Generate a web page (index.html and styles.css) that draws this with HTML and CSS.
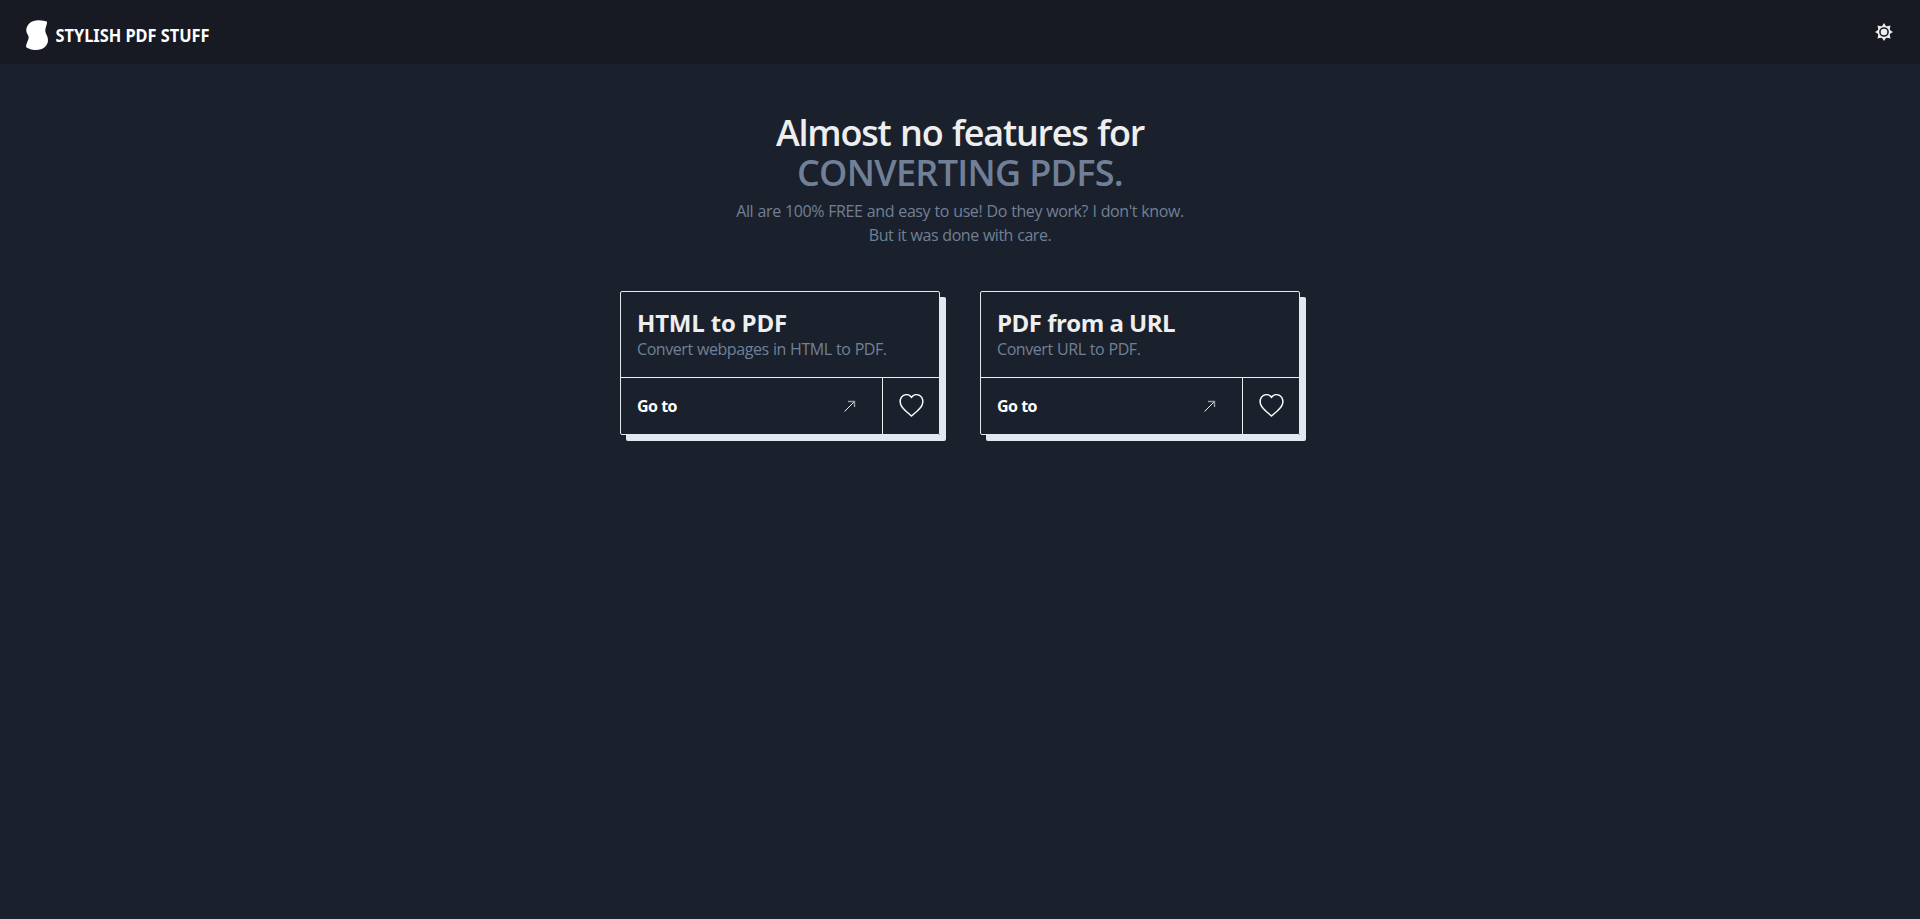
FILE: index.html
```html
<!DOCTYPE html>
<html lang="en">
<head>
<meta charset="utf-8">
<title>Stylish PDF Stuff</title>
<link rel="stylesheet" href="styles.css">
</head>
<body>
<header class="navbar">
  <a class="brand">
    <svg class="brand-mark" width="22" height="30" viewBox="0 0 22 30"><path d="M.3 11C0 4 6 0 13 .2C16 .3 19.500 1 21 1.500C21.500 4.500 18.800 8 19.300 11.500C19.600 14 22 16 22 20C22 26 17 30 10 30C5.500 30 1.500 28.500 0 27C0 23 2.700 20 2.700 17.500C2.700 15 .4 13.500 .3 11Z"/></svg>
    <svg class="brand-name" width="156" height="26" viewBox="0 0 156 26"><text x=".5" y="18.800" textLength="154" lengthAdjust="spacingAndGlyphs">STYLISH PDF STUFF</text></svg>
  </a>
  <button class="theme-toggle" aria-label="Toggle theme">
    <svg width="18" height="18" viewBox="0 0 18 18"><path class="sun-rays" d="M9 0L11.200 3.600H6.800ZM9 18L11.200 14.400H6.800ZM0 9L3.600 6.800V11.200ZM18 9L14.400 6.800V11.200ZM2.500 2.500L6.800 3.400L3.400 6.800ZM15.500 2.500L11.200 3.400L14.600 6.800ZM2.500 15.500L6.800 14.600L3.400 11.200ZM15.500 15.500L11.200 14.600L14.600 11.200Z"/><circle class="sun-ring" cx="9" cy="9" r="5.600"/><circle class="sun-core" cx="9" cy="9" r="3.300"/></svg>
  </button>
</header>
<main class="content">
  <h1 class="title"><span class="title-top">Almost no features for</span><span class="title-accent">CONVERTING PDFS.</span></h1>
  <p class="lead"><span class="lead-a">All are 100% FREE and easy to use! Do they work? I don't know.</span><span class="lead-b">But it was done with care.</span></p>
  <section class="cards">
    <article class="card">
      <div class="card-body"><h2 class="card-title">HTML to PDF</h2><p class="card-text">Convert webpages in HTML to PDF.</p></div>
      <div class="card-actions">
        <a class="card-link"><span>Go to</span><svg class="arrow" width="12" height="12" viewBox="0 0 12 12"><path d="M.5 11.500L10 2"/><path class="arrow-head" d="M4 1.500H10.500V7"/></svg></a>
        <button class="like" aria-label="Like"><svg width="25" height="24" viewBox="0 0 25 24"><path d="M12.500 3.200C10.500 .5 7 .1 4.500 1.400C1 3.300 .5 7.500 1.800 10.700C3.500 15 8 18 12.500 22C17 18 21.500 15 23.200 10.700C24.500 7.500 24 3.300 20.500 1.400C18 .1 14.500 .5 12.500 3.200Z"/></svg></button>
      </div>
    </article>
    <article class="card">
      <div class="card-body"><h2 class="card-title card-title-tight">PDF from a URL</h2><p class="card-text">Convert URL to PDF.</p></div>
      <div class="card-actions">
        <a class="card-link"><span>Go to</span><svg class="arrow" width="12" height="12" viewBox="0 0 12 12"><path d="M.5 11.500L10 2"/><path class="arrow-head" d="M4 1.500H10.500V7"/></svg></a>
        <button class="like" aria-label="Like"><svg width="25" height="24" viewBox="0 0 25 24"><path d="M12.500 3.200C10.500 .5 7 .1 4.500 1.400C1 3.300 .5 7.500 1.800 10.700C3.500 15 8 18 12.500 22C17 18 21.500 15 23.200 10.700C24.500 7.500 24 3.300 20.500 1.400C18 .1 14.500 .5 12.500 3.200Z"/></svg></button>
      </div>
    </article>
  </section>
</main>
</body>
</html>
```
FILE: styles.css
```css
* { box-sizing: border-box; margin: 0; padding: 0; }
body { min-height: 100vh; background: #1a202c; color: #eee; font: 16px/24px "Open Sans", "Noto Sans", sans-serif; }
button { border: 0; background: none; }
svg { display: block; overflow: visible; }
.navbar { display: flex; justify-content: space-between; height: 64px; padding: 0 27px 0 26px; background: #171923; }
.brand { display: flex; align-items: flex-start; padding-top: 20px; gap: 7px; }
.brand-mark, .brand-name { fill: #fff; }
.brand-name { margin-top: 3px; font: 700 17.500px "Noto Sans", sans-serif; }
.theme-toggle { align-self: flex-start; padding-top: 23px; }
.sun-rays, .sun-core { fill: #eee; }
.sun-ring { fill: none; stroke: #eee; stroke-width: 1.500; }
.content { display: flex; flex-direction: column; align-items: center; padding-top: 49px; }
.title { display: flex; flex-direction: column; align-items: center; font-size: 36px; line-height: 40px; font-weight: 600; }
.title-top { letter-spacing: -1.25px; word-spacing: 1.500px; }
.title-accent { color: #718096; letter-spacing: -.7px; }
.lead { display: flex; flex-direction: column; align-items: center; margin-top: 6px; color: #718096; letter-spacing: -.43px; word-spacing: .6px; }
.lead-b { letter-spacing: -.48px; }
.cards { display: flex; gap: 40px; margin-top: 44px; }
.card { width: 320px; height: 144px; border: 1px solid #e2e8f0; border-radius: 2px; box-shadow: 6px 6px 0 #e2e8f0; }
.card-body { height: 85px; padding: 16px; }
.card-title { font-size: 24px; line-height: 30px; font-weight: 700; letter-spacing: -.2px; }
.card-title-tight { letter-spacing: -.52px; }
.card-text { color: #718096; line-height: 22px; letter-spacing: -.43px; word-spacing: .5px; }
.card-actions { display: flex; height: 57px; border-top: 1px solid #eee; }
.card-link { display: flex; flex: 1; align-items: center; justify-content: space-between; padding: 0 26px 0 16px; font-weight: 700; color: #fff; letter-spacing: -.5px; }
.like { display: flex; align-items: center; justify-content: center; width: 57px; border-left: 1px solid #eee; }
.like path { fill: none; stroke: #fff; stroke-width: 1.500; }
.arrow { fill: none; stroke: #eee; stroke-width: 1; }
.arrow-head { stroke: #999da3; stroke-width: 1.400; }
```
